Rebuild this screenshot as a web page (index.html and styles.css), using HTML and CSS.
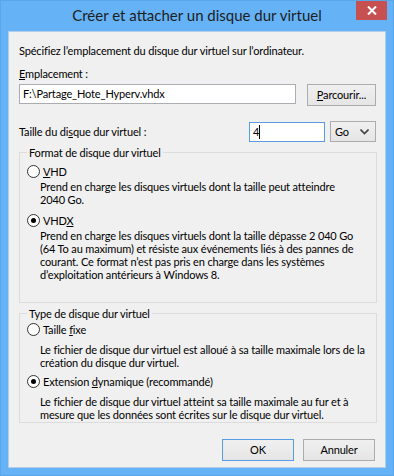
FILE: index.html
```html
<!DOCTYPE html>
<html lang="fr">
<head>
    <meta charset="UTF-8">
    <title>Créer et attacher un disque dur virtuel</title>
    <link rel="stylesheet" href="styles.css">
</head>
<body>

    <div class="window">
        <div class="titlebar">
            <span></span>
            <div class="title">Créer et attacher un disque dur virtuel</div>
            <div class="close-cell">
                <div class="close-btn">
                    <svg width="10" height="9" viewBox="0 0 10 9">
                        <path d="M1 0.5 L9 8.5 M9 0.5 L1 8.5" stroke="#fff" stroke-width="2"/>
                    </svg>
                </div>
            </div>
        </div>

        <div class="client">
            <div class="intro">Spécifiez l’emplacement du disque dur virtuel sur l’ordinateur.</div>
            <div class="label-line"><u>E</u>mplacement :</div>

            <div class="path-row">
                <div class="textbox path-box">F:\Partage_Hote_Hyperv.vhdx</div>
                <div class="button browse-btn"><u>P</u>arcourir...</div>
            </div>

            <div class="size-row">
                <div class="size-label">Taille du di<u>s</u>que dur virtuel :</div>
                <div class="textbox size-box focused">4<span class="caret"></span></div>
                <div class="combo">
                    <span>Go</span>
                    <svg width="9" height="6" viewBox="0 0 9 6">
                        <path d="M0.5 0.5 L4.5 4.5 L8.5 0.5" fill="none" stroke="#444" stroke-width="1.6"/>
                    </svg>
                </div>
            </div>

            <fieldset class="group group-format">
                <legend>Format de disque dur virtuel</legend>

                <div class="radio-row first">
                    <span class="radio"></span>
                    <span><u>V</u>HD</span>
                </div>
                <div class="desc">
                    Prend en charge les disques virtuels dont la taille peut atteindre<br>
                    2040 Go.
                </div>

                <div class="radio-row spaced">
                    <span class="radio checked"></span>
                    <span>VHD<u>X</u></span>
                </div>
                <div class="desc">
                    Prend en charge les disques virtuels dont la taille dépasse 2 040 Go<br>
                    (64 To au maximum) et résiste aux événements liés à des pannes de<br>
                    courant. Ce format n’est pas pris en charge dans les systèmes<br>
                    d’exploitation antérieurs à Windows 8.
                </div>
            </fieldset>

            <fieldset class="group group-type">
                <legend>Type de disque dur virtuel</legend>

                <div class="radio-row first">
                    <span class="radio"></span>
                    <span>Taille <u>f</u>ixe</span>
                </div>
                <div class="desc gap">
                    Le fichier de disque dur virtuel est alloué à sa taille maximale lors de la<br>
                    création du disque dur virtuel.
                </div>

                <div class="radio-row gap">
                    <span class="radio checked"></span>
                    <span>Extension <u>d</u>ynamique (recommandé)</span>
                </div>
                <div class="desc gap">
                    Le fichier de disque dur virtuel atteint sa taille maximale au fur et à<br>
                    mesure que les données sont écrites sur le disque dur virtuel.
                </div>
            </fieldset>

            <div class="actions">
                <div class="button default-btn">OK</div>
                <div class="button">Annuler</div>
            </div>
        </div>
    </div>

</body>
</html>
```

FILE: styles.css
```css
body {
    margin: 0;
    font-family: Lato, "Liberation Sans", sans-serif;
    font-size: 11px;
    letter-spacing: -0.15px;
    color: #000;
}

.window {
    width: 394px;
    height: 476px;
    box-sizing: border-box;
    background-color: #65b2f6;
    border: 1px solid #5aa6ea;
    display: flex;
    flex-direction: column;
}

.titlebar {
    height: 30px;
    display: grid;
    grid-template-columns: 1fr auto 1fr;
    align-items: start;
}

.title {
    font-size: 15px;
    letter-spacing: 0;
    color: #1e1e1e;
    line-height: 29px;
    white-space: nowrap;
}

.close-cell {
    display: flex;
    justify-content: flex-end;
    padding-right: 6px;
}

.close-btn {
    width: 31px;
    height: 19px;
    background-color: #c75050;
    display: flex;
    align-items: center;
    justify-content: center;
}

.client {
    margin: 0 7px 7px 7px;
    flex: 1;
    background-color: #f0f0f0;
    border: 1px solid #b4cde8;
    padding: 11px 8px 0 10px;
    display: flex;
    flex-direction: column;
}

.intro {
    line-height: 15px;
}

.label-line {
    line-height: 15px;
    margin-top: 8px;
}

.path-row {
    display: flex;
    align-items: flex-start;
    margin-top: 3px;
}

.textbox {
    box-sizing: border-box;
    height: 20px;
    border: 1px solid #abadb3;
    background-color: #fff;
    line-height: 18px;
    padding: 0 3px;
    white-space: nowrap;
}

.path-box {
    width: 277px;
}

.button {
    box-sizing: border-box;
    height: 22px;
    border: 1px solid #acacac;
    background: linear-gradient(#f0f0f0, #e5e5e5);
    line-height: 20px;
    text-align: center;
}

.browse-btn {
    width: 69px;
    margin-left: 11px;
}

.size-row {
    display: flex;
    align-items: center;
    margin-top: 15px;
    height: 21px;
}

.size-label {
    flex: 1;
}

.size-box {
    width: 76px;
}

.focused {
    border-color: #569de5;
}

.caret {
    display: inline-block;
    width: 1px;
    height: 14px;
    background-color: #000;
    vertical-align: -3px;
}

.combo {
    box-sizing: border-box;
    width: 46px;
    height: 21px;
    margin-left: 5px;
    margin-right: 1px;
    border: 1px solid #acacac;
    background: linear-gradient(#f0f0f0, #e5e5e5);
    display: flex;
    align-items: center;
    justify-content: space-between;
    padding: 0 6px 0 4px;
}

.group {
    margin: 3px 0 0 0;
    padding: 0 0 0 7px;
    border: 1px solid #dcdcdc;
    min-width: 0;
}

.group legend {
    padding: 0 2px;
    margin-left: 0;
    line-height: 15px;
}

.group-format {
    padding-bottom: 21px;
}

.group-type {
    margin-top: 3px;
    padding-bottom: 1px;
}

.radio-row {
    display: flex;
    align-items: center;
    line-height: 15px;
}

.radio-row.first {
    margin-top: 4px;
}

.radio-row.spaced {
    margin-top: 7px;
}

.radio-row.gap {
    margin-top: 5px;
}

.group-type .radio-row.first {
    margin-top: 1px;
}

.radio {
    box-sizing: border-box;
    width: 13px;
    height: 13px;
    border: 1px solid #333;
    border-radius: 50%;
    background-color: #fff;
    margin-right: 3px;
    display: flex;
    align-items: center;
    justify-content: center;
}

.radio.checked::after {
    content: "";
    width: 5px;
    height: 5px;
    border-radius: 50%;
    background-color: #000;
}

.desc {
    padding-left: 13px;
    line-height: 13px;
    margin-top: 1px;
    white-space: nowrap;
}

.desc.gap {
    margin-top: 6px;
}

.actions {
    display: flex;
    justify-content: flex-end;
    gap: 9px;
    margin-top: 16px;
    padding-right: 2px;
}

.actions .button {
    width: 72px;
}

.default-btn {
    border-color: #569de5;
}
```
